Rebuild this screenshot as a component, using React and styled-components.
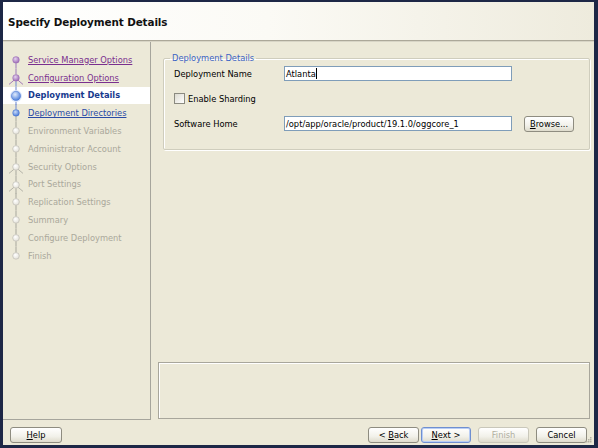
import React from 'react';
import styled, { createGlobalStyle } from 'styled-components';

const GlobalStyle = createGlobalStyle`
  html, body {
    margin: 0;
    padding: 0;
    background: #1d2746;
  }
  body {
    font-family: "DejaVu Sans", Verdana, sans-serif;
    font-size: 8.3px;
    color: #000;
  }
`;

const Window = styled.div`
  width: 591px;
  height: 443px;
  margin: 2px 0 0 3px;
  background: #ece9d8;
  display: flex;
  flex-direction: column;
  position: relative;
`;

const Header = styled.div`
  height: 38px;
  flex: none;
  display: flex;
  align-items: center;
  padding-left: 5px;
  background: linear-gradient(to right, #ffffff 0%, #fbfaf5 45%, #eeebdd 100%);
  border-bottom: 1px solid #aca899;
  box-shadow: 0 1px 0 #d8d5c6;
`;

const Title = styled.h1`
  margin: 1px 0 0;
  font-size: 10.4px;
  letter-spacing: -0.1px;
  font-weight: bold;
  color: #111;
`;

const Main = styled.div`
  flex: 1;
  display: flex;
  margin-top: 1px;
  min-height: 0;
`;

const Nav = styled.ul`
  list-style: none;
  margin: 0;
  padding: 9px 0 0;
  width: 147px;
  flex: none;
  border-right: 1px solid #a6a59c;
  border-bottom: 1px solid #a6a59c;
`;

const NavItem = styled.li`
  height: 17.8px;
  display: flex;
  align-items: center;
  background: ${p => (p.$current ? '#ffffff' : 'transparent')};
`;

const NavIcon = styled.svg`
  width: 25px;
  height: 17.8px;
  flex: none;
  overflow: visible;
`;

const navColors = {
  visited: '#7a2f8e',
  current: '#173a8e',
  link: '#2a4ba6',
  disabled: '#aaa89b',
};

const NavLabel = styled.span`
  color: ${p => navColors[p.$state]};
  font-weight: ${p => (p.$state === 'current' ? 'bold' : 'normal')};
  text-decoration: ${p => (p.$state === 'visited' || p.$state === 'link' ? 'underline' : 'none')};
  white-space: nowrap;
`;

const Content = styled.div`
  flex: 1;
  display: flex;
  flex-direction: column;
  padding: 11px 4px 1px 7px;
`;

const Group = styled.fieldset`
  margin: 0 0 0 5px;
  padding: 0 10px;
  height: 97px;
  box-sizing: border-box;
  border: 1px solid #cfcdbd;
  border-radius: 2px;
  box-shadow: inset 1px 1px 0 #fff, 1px 1px 0 #fff;
`;

const Legend = styled.legend`
  padding: 0 2px;
  margin-left: -4px;
  margin-bottom: -2px;
  color: #3b63c4;
  font-size: 8.3px;
`;

const Row = styled.div`
  display: flex;
  align-items: center;
  height: 25px;
`;

const Label = styled.span`
  width: 110px;
  flex: none;
`;

const TextField = styled.div`
  width: 225px;
  height: 13px;
  border: 1px solid #7f9db9;
  background: #fff;
  display: flex;
  align-items: center;
  padding-left: 1px;
  white-space: nowrap;
  overflow: hidden;
`;

const Caret = styled.span`
  display: inline-block;
  width: 1px;
  height: 11px;
  background: #000;
`;

const CheckBox = styled.span`
  width: 9px;
  height: 9px;
  border: 1px solid #8b8a80;
  background: linear-gradient(135deg, #dcdad0, #fff);
  margin-right: 3px;
`;

const Button = styled.button`
  font-family: "DejaVu Sans", Verdana, sans-serif;
  font-size: 8.3px;
  width: ${p => p.$w || 51}px;
  height: 16px;
  padding: 0;
  margin-left: ${p => p.$gap || 0}px;
  border-radius: 3px;
  border: 1px solid ${p => (p.$default ? '#6f8fd0' : p.disabled ? '#c9c7ba' : '#8e8c80')};
  box-shadow: ${p => (p.$default ? 'inset 0 0 0 1px #b8cdf5' : 'none')};
  background: linear-gradient(#ffffff, #f2f1ea 60%, #dedbcc);
  color: ${p => (p.disabled ? '#b0ae9f' : '#000')};
  flex: none;
  u { text-decoration: underline; }
`;

const InfoPanel = styled.div`
  margin-top: auto;
  height: 55px;
  border: 1px solid #a8a69b;
  box-shadow: inset 1px 1px 0 #fff;
`;

const Footer = styled.div`
  height: 25px;
  flex: none;
  display: flex;
  align-items: flex-start;
  padding: 7px 7px 0 7px;
  box-sizing: border-box;
`;

const Spacer = styled.div`
  flex: 1;
`;

const Grip = styled.svg`
  position: absolute;
  right: 1px;
  bottom: 1px;
  width: 10px;
  height: 10px;
`;

const steps = [
  { label: 'Service Manager Options', state: 'visited' },
  { label: 'Configuration Options', state: 'visited', fork: true },
  { label: 'Deployment Details', state: 'current' },
  { label: 'Deployment Directories', state: 'link' },
  { label: 'Environment Variables', state: 'disabled' },
  { label: 'Administrator Account', state: 'disabled' },
  { label: 'Security Options', state: 'disabled', fork: true },
  { label: 'Port Settings', state: 'disabled', fork: true },
  { label: 'Replication Settings', state: 'disabled' },
  { label: 'Summary', state: 'disabled' },
  { label: 'Configure Deployment', state: 'disabled' },
  { label: 'Finish', state: 'disabled' },
];

const lineColor = i => {
  if (i < 1) return '#a584bd';
  if (i < 3) return '#7890d2';
  return '#aeada3';
};

function StepIcon({ index, state, fork, last }) {
  const cx = 13;
  const cy = 8.9;
  const r = state === 'current' ? 4.6 : 3.3;
  const fills = {
    visited: ['#e4d2ee', '#9d6bb6'],
    current: ['#e0ebfc', '#4d80dc'],
    link: ['#c8dbf9', '#4b7bd8'],
    disabled: ['#ffffff', '#e4e2d9'],
  };
  const stroke = state === 'disabled' ? '#aeada3' : state === 'visited' ? '#9a6eb3' : '#4370cc';
  const id = `g${index}`;
  return (
    <NavIcon viewBox="0 0 25 17.8">
      <defs>
        <radialGradient id={id} cx="40%" cy="35%" r="65%">
          <stop offset="0%" stopColor={fills[state][0]} />
          <stop offset="100%" stopColor={fills[state][1]} />
        </radialGradient>
      </defs>
      {index > 0 && <line x1={cx} y1={0} x2={cx} y2={cy - r} stroke={lineColor(index - 1)} strokeWidth="1.1" />}
      {!last && <line x1={cx} y1={cy + r} x2={cx} y2={17.8} stroke={lineColor(index)} strokeWidth="1.1" />}
      {fork && (
        <g stroke={stroke} strokeWidth="0.9" fill="none">
          <line x1={cx - 2} y1={cy + 2.3} x2={cx - 7} y2={cy + 6.5} />
          <line x1={cx + 2} y1={cy + 2.3} x2={cx + 7} y2={cy + 6.5} />
        </g>
      )}
      {state === 'current' && <circle cx={cx} cy={cy} r={r + 1.4} fill="#dce7fb" />}
      <circle cx={cx} cy={cy} r={r} fill={`url(#${id})`} stroke={stroke} strokeWidth="0.5" />
    </NavIcon>
  );
}

export default function App() {
  return (
    <>
      <GlobalStyle />
      <Window>
        <Header>
          <Title>Specify Deployment Details</Title>
        </Header>
        <Main>
          <Nav>
            {steps.map((s, i) => (
              <NavItem key={s.label} $current={s.state === 'current'}>
                <StepIcon index={i} state={s.state} fork={s.fork} last={i === steps.length - 1} />
                <NavLabel $state={s.state}>{s.label}</NavLabel>
              </NavItem>
            ))}
          </Nav>
          <Content>
            <Group>
              <Legend>Deployment Details</Legend>
              <Row>
                <Label>Deployment Name</Label>
                <TextField>Atlanta<Caret /></TextField>
              </Row>
              <Row>
                <CheckBox />
                <span>Enable Sharding</span>
              </Row>
              <Row>
                <Label>Software Home</Label>
                <TextField>/opt/app/oracle/product/19.1.0/oggcore_1</TextField>
                <Button $w={50} $gap={12}>
                  <u>B</u>rowse...
                </Button>
              </Row>
            </Group>
            <InfoPanel />
          </Content>
        </Main>
        <Footer>
          <Button $w={52}>
            <u>H</u>elp
          </Button>
          <Spacer />
          <Button>
            &lt; <u>B</u>ack
          </Button>
          <Button $default $w={50} $gap={2}>
            <u>N</u>ext &gt;
          </Button>
          <Button disabled $gap={7}>
            Finish
          </Button>
          <Button $gap={7}>Cancel</Button>
        </Footer>
        <Grip viewBox="0 0 10 10">
          <g fill="#b3b0a2">
            <rect x="7" y="3" width="1.5" height="1.5" />
            <rect x="5" y="5" width="1.5" height="1.5" />
            <rect x="7" y="5" width="1.5" height="1.5" />
            <rect x="3" y="7" width="1.5" height="1.5" />
            <rect x="5" y="7" width="1.5" height="1.5" />
            <rect x="7" y="7" width="1.5" height="1.5" />
          </g>
        </Grip>
      </Window>
    </>
  );
}
